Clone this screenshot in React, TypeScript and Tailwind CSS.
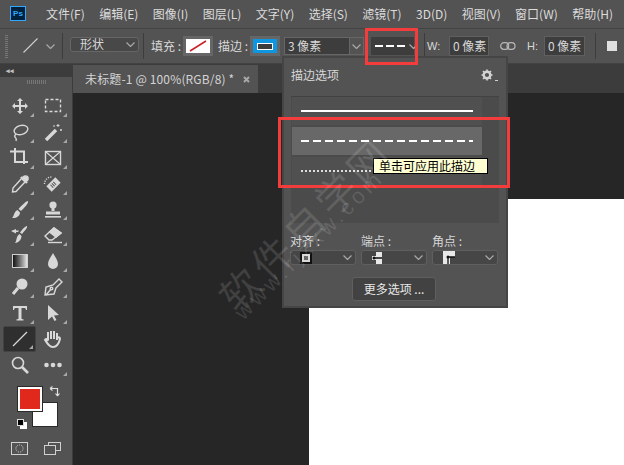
import React from "react";

const cjk = { fontFamily: '"Noto Sans CJK SC","Liberation Sans",sans-serif' };

function Chev({ className = "" }: { className?: string }) {
  return (
    <svg width="9" height="5" viewBox="0 0 9 5" className={`shrink-0 ${className}`}>
      <path d="M0.5 0.5 L4.5 4.5 L8.5 0.5" fill="none" stroke="#a8a8a8" strokeWidth="1.2" />
    </svg>
  );
}

function Corner() {
  return (
    <svg width="4" height="4" viewBox="0 0 4 4" className="absolute right-[2px] bottom-[2px]">
      <path d="M4 0 V4 H0 Z" fill="#a8a8a8" />
    </svg>
  );
}

const s = "#d8d8d8";
type Tool = { icon: React.ReactNode; corner?: boolean; active?: boolean };
const I = (c: React.ReactNode) => (
  <svg width="20" height="20" viewBox="0 0 20 20" fill="none" stroke={s} strokeWidth="1.4">
    {c}
  </svg>
);

const tools: Tool[] = [
  { corner: true, icon: I(<g fill={s} stroke="none"><path d="M10 2 l3 3 h-2 v4 h4 v-2 l3 3 -3 3 v-2 h-4 v4 h2 l-3 3 -3 -3 h2 v-4 h-4 v2 l-3 -3 3 -3 v2 h4 v-4 h-2z" /></g>) },
  { corner: true, icon: I(<rect x="2.5" y="3.5" width="15" height="12" strokeDasharray="3 2" />) },
  { corner: true, icon: I(<><ellipse cx="11" cy="8" rx="7" ry="4.5" transform="rotate(-15 11 8)" /><path d="M6 12 q-2 2 -1 3 q2 2 1 4" /></>) },
  { corner: true, icon: I(<><path d="M3 18 L13 8" strokeWidth="3.4" /><path d="M15 2v3M13.5 3.5h3M18 7v2M17 8h2M11 3v2" strokeWidth="1" /></>) },
  { corner: true, icon: I(<path d="M0 3.5 H14 V16 M5 0 V14 H18" strokeWidth="2" />) },
  { corner: true, icon: I(<><rect x="2.5" y="3.5" width="15" height="13" /><path d="M2.5 3.5 L17.5 16.5 M17.5 3.5 L2.5 16.5" strokeWidth="1.1" /></>) },
  { corner: true, icon: I(<><path d="M12 4 L3 14 L2.5 18 L6 17.5 L15 8" /><path d="M11 3 L17 9" strokeWidth="2.4" /><circle cx="15.5" cy="4.5" r="2.6" fill={s} /></>) },
  { corner: true, icon: I(<><path d="M6 15 L15 6" strokeWidth="7.5" /><path d="M8.5 12.5 L12.5 8.5" stroke="#555" strokeWidth="4" strokeDasharray="1 1" /><path d="M1.5 10 a7 7 0 0 1 7 -7" strokeDasharray="1.2 1.2" /></>) },
  { corner: true, icon: I(<g fill={s} stroke="none"><path d="M18 1 C19 3 14 8 11 11 L8.5 9 C11 6 16 1 18 1Z" /><path d="M7.5 10 L10 12.5 C10 16 6 18.5 2 18 C4.5 16 3.5 12 7.5 10Z" /></g>) },
  { corner: true, icon: I(<g fill={s} stroke="none"><circle cx="10" cy="5" r="3.6" /><rect x="8.5" y="7" width="3" height="4" /><path d="M3 11.5 H17 V14.5 H3Z" /><rect x="2" y="16" width="16" height="1.6" /></g>) },
  { corner: true, icon: I(<g fill={s} stroke="none"><path d="M17 1 C18 3 14 6 12 9 L10 7.5 C12 5 15 1 17 1Z" /><path d="M9.5 9 L11.5 11 C11.5 15 8 18 5 18 C7 15.5 6 11.5 9.5 9Z" /><path d="M1 6 L6 4 V5.5 H9 L8 7 H6 V8.5Z" /></g>) },
  { corner: true, icon: I(<><path d="M2 11 L11 3 L18 8 L9 15 H6Z" /><path d="M11 3 L18 8 L13 12 L6.5 7Z" fill={s} /><path d="M5 17.5 H19" /></>) },
  { corner: true, icon: <span className="block w-[16px] h-[14px] bg-gradient-to-r from-[#151515] to-[#e4e4e4] border border-[#cfcfcf]" /> },
  { corner: true, icon: I(<path d="M10 2 C12 6 15 9 15 13 A5 5 0 0 1 5 13 C5 9 8 6 10 2Z" fill={s} stroke="none" />) },
  { corner: true, icon: I(<><circle cx="12" cy="7" r="5.5" fill={s} stroke="none" /><path d="M8 11 L3 17" strokeWidth="3" /></>) },
  { corner: true, icon: I(<><path d="M10 8 L16 2 L19 5 L13 11 L11 17 L2 18 L3 10Z" /><path d="M3 18 L8 12" /><circle cx="8.5" cy="11.5" r="1.3" /></>) },
  { corner: true, icon: I(<g fill={s} stroke="none"><path d="M3 3 H17 V7 H16 C16 6 15.5 5 14.5 5 H11.5 V15.5 C11.5 16 12 16.2 13.5 16.2 V17.5 H6.5 V16.2 C8 16.2 8.5 16 8.5 15.5 V5 H5.5 C4.5 5 4 6 4 7 H3Z" /></g>) },
  { corner: true, icon: I(<path d="M5 2 L16 12 L11 12.5 L13.5 17 L11.5 18 L9 13.5 L5 17Z" fill={s} stroke="none" />) },
  { corner: true, active: true, icon: I(<path d="M3 17 L17 3" strokeWidth="1.2" />) },
  { corner: false, icon: I(<path d="M5 3 V11 M8 2 V10 M11 2 V10 M14 4 V11 M14 9 C16 8 17 8 17 10 C16 14 14 18 10 18 C6 18 5 15 2 11 C3 9 4 10 5 12" strokeWidth="2" />) },
  { corner: false, icon: I(<><circle cx="8" cy="8" r="5.5" strokeWidth="1.6" /><path d="M12 12 L18 18" strokeWidth="2.6" /></>) },
  { corner: true, icon: I(<g fill={s} stroke="none"><circle cx="3.5" cy="10" r="2.3" /><circle cx="10" cy="10" r="2.3" /><circle cx="16.5" cy="10" r="2.3" /></g>) },
];

function Toolbar() {
  return (
    <aside className="w-[73px] shrink-0 flex flex-col bg-[#535353] border-r border-[#3c3c3c]">
      <div className="h-[13px] bg-[#3c3c3c] flex items-center pl-[6px] text-[7px] leading-none text-[#c0c0c0] font-bold">◂◂</div>
      <div className="h-[16px] flex justify-center items-start pt-[3px]">
        <span className="w-[19px] h-[4px] bg-[repeating-linear-gradient(90deg,#777_0,#777_1px,transparent_1px,transparent_2px)]" />
      </div>
      <div className="grid grid-cols-2 px-[3px]">
        {tools.map((t, i) => (
          <div key={i} className={`relative h-[25.9px] w-[33px] flex items-center justify-center rounded-[2px] ${t.active ? "bg-[#2f2f2f] border border-[#424242]" : ""}`}>
            {t.icon}
            {t.corner && <Corner />}
          </div>
        ))}
      </div>
      <div className="relative h-[64px] shrink-0">
        <div className="absolute left-[32px] top-[24px] w-[26px] h-[25px] bg-white border border-[#2a2a2a]" />
        <div className="absolute left-[18px] top-[9px] w-[24px] h-[24px] bg-[#e0281c] border-2 border-white outline outline-1 outline-[#2a2a2a]" />
        <svg width="11" height="11" viewBox="0 0 11 11" className="absolute left-[49px] top-[8px]">
          <path d="M1 2.5 H8.5 V10 M1 2.5 l2.5 -2 M1 2.5 l2.5 2 M8.5 10 l-2 -2.5 M8.5 10 l2 -2.5" stroke="#e0e0e0" strokeWidth="1.2" fill="none" />
        </svg>
        <div className="absolute left-[20px] top-[44px] w-[7px] h-[7px] bg-white" />
        <div className="absolute left-[17px] top-[41px] w-[7px] h-[7px] bg-black border border-[#ddd]" />
      </div>
      <div className="relative flex pl-[11px] gap-[16px]">
        <svg width="17" height="13" viewBox="0 0 17 13">
          <rect x="0.5" y="0.5" width="16" height="12" fill="none" stroke="#d0d0d0" />
          <circle cx="8.5" cy="6.5" r="3.6" fill="none" stroke="#d0d0d0" strokeDasharray="1 1" />
        </svg>
        <svg width="17" height="13" viewBox="0 0 17 13" fill="none" stroke="#d0d0d0">
          <rect x="4.5" y="0.5" width="12" height="8" />
          <rect x="0.5" y="3.5" width="11" height="9" fill="#535353" />
        </svg>
      </div>
    </aside>
  );
}

const menus = ["文件(F)", "编辑(E)", "图像(I)", "图层(L)", "文字(Y)", "选择(S)", "滤镜(T)", "3D(D)", "视图(V)", "窗口(W)", "帮助(H)"];

function MenuBar() {
  return (
    <div className="h-[28px] shrink-0 flex items-center bg-[#535353] text-[#dcdcdc] text-[12px]">
      <div className="w-[16px] h-[15px] ml-[10px] mr-[20px] -mt-[1px] border border-[#31a8ff] bg-[#00213b] text-[#31a8ff] text-[8px] font-bold leading-[13px] text-center" style={{ fontFamily: '"Liberation Sans"' }}>Ps</div>
      <div className="flex gap-[14.4px]">
        {menus.map((m) => <span key={m} className="whitespace-nowrap">{m}</span>)}
      </div>
    </div>
  );
}

function Sep({ className = "" }: { className?: string }) {
  return <span className={`w-px h-[26px] bg-[#3d3d3d] shrink-0 ${className}`} />;
}

function OptionsBar() {
  return (
    <div className="relative h-[36px] shrink-0 flex items-center bg-[#535353] border-y border-[#424242] text-[#d8d8d8] text-[12px]">
      <span className="w-[3px] h-[24px] ml-[5px] shrink-0 bg-[repeating-linear-gradient(0deg,#777_0,#777_1px,transparent_1px,transparent_2px)]" />
      <svg width="15" height="15" viewBox="0 0 15 15" className="ml-[15px] shrink-0 -mt-[1px]"><path d="M0.5 14.5 L14.5 0.5" stroke="#d0d0d0" strokeWidth="1.1" /></svg>
      <Chev className="ml-[8px]" />
      <Sep className="ml-[7px]" />
      <div className="ml-[7px] w-[69px] h-[15px] shrink-0 -mt-[4px] border border-[#666] rounded-[3px] bg-[#484848] flex items-center justify-between pl-[9px] pr-[3px]">
        <span className="text-[12px] leading-none">形状</span><Chev />
      </div>
      <Sep className="ml-[4px]" />
      <span className="ml-[7px] w-[32px] shrink-0 whitespace-nowrap">填充 :</span>
      <span className="w-[30px] h-[20px] p-[3px] bg-[#666] block shrink-0">
        <svg width="24" height="14" viewBox="0 0 24 14" className="bg-white block"><path d="M4 12 L20 2" stroke="#cc2229" strokeWidth="1.6" /></svg>
      </span>
      <span className="ml-[5px] w-[32px] shrink-0 whitespace-nowrap">描边 :</span>
      <span className="w-[30px] h-[20px] p-[3px] bg-[#666] block shrink-0">
        <span className="flex w-[24px] h-[14px] bg-[#0e96e0] items-center justify-center"><span className="block w-[16px] h-[7px] bg-[#3c3c3c] border border-white" /></span>
      </span>
      <div className="ml-[4px] w-[80px] h-[18px] shrink-0 flex border border-[#666] bg-[#3d3d3d]">
        <span className="flex-1 pl-[3px] leading-[16px] text-[12px] whitespace-nowrap">3 像素</span>
        <span className="w-[14px] bg-[#535353] border-l border-[#666] flex items-center justify-center"><Chev /></span>
      </div>
      <div className="ml-[7px] w-[43px] h-[18px] shrink-0 bg-[#3d3d3d] flex items-center pl-[4px] gap-[4px]">
        <span className="flex gap-[3px] items-center">
          <span className="block w-[8px] h-[2px] bg-white" /><span className="block w-[8px] h-[2px] bg-white" /><span className="block w-[8px] h-[2px] bg-white" />
        </span>
        <Chev />
      </div>
      <Sep className="ml-[10px]" />
      <span className="ml-[2px] w-[22px] shrink-0 text-[11px]" style={{ fontFamily: '"Liberation Sans"' }}>W:</span>
      <span className="w-[40px] h-[20px] shrink-0 bg-[#3d3d3d] border border-[#5f5f5f] pl-[3px] leading-[18px] whitespace-nowrap">0 像素</span>
      <svg width="16" height="8" viewBox="0 0 16 8" className="ml-[11px] shrink-0" fill="none" stroke="#b8b8b8" strokeWidth="1.2"><rect x="0.7" y="0.7" width="8" height="6.6" rx="3.3" /><rect x="7" y="0.7" width="8" height="6.6" rx="3.3" /></svg>
      <span className="ml-[11px] w-[17px] shrink-0 text-[11px]" style={{ fontFamily: '"Liberation Sans"' }}>H:</span>
      <span className="w-[41px] h-[20px] shrink-0 bg-[#3d3d3d] border border-[#5f5f5f] pl-[3px] leading-[18px] whitespace-nowrap">0 像素</span>
      <Sep className="ml-[10px]" />
      <span className="ml-[11px] w-[10px] h-[10px] bg-[#e0e0e0] shrink-0" />
    </div>
  );
}

function Select({ label, icon }: { label: string; icon: React.ReactNode }) {
  return (
    <div className="w-[66px]">
      <div className="text-[12px] leading-[14px] text-[#d8d8d8] whitespace-nowrap">{label}</div>
      <div className="mt-[2px] h-[15px] rounded-[3px] bg-[#464646] border border-[#5f5f5f] flex items-center justify-between pr-[3px] pl-[9px]">
        {icon}<Chev />
      </div>
    </div>
  );
}

function Popover() {
  return (
    <div className="absolute left-[282px] top-[56px] w-[226px] h-[252px] bg-[#535353] border-2 border-[#454545] px-[6px]">
      <div className="flex justify-between items-center h-[33px] text-[12px] text-[#d8d8d8]">
        <span className="pl-[1px]">描边选项</span>
        <span className="flex items-end gap-[2px] pr-[2px]">
          <svg width="12" height="12" viewBox="0 0 12 12"><circle cx="6" cy="6" r="3.3" fill="none" stroke="#d4d4d4" strokeWidth="2.4" /><path d="M6 0.5V2.5M6 9.5V11.5M0.5 6H2.5M9.5 6H11.5M2 2L3.5 3.5M8.5 8.5L10 10M10 2L8.5 3.5M3.5 8.5L2 10" stroke="#d4d4d4" strokeWidth="1.6" /></svg>
          <span className="block w-[3px] h-[1px] bg-[#d0d0d0]" />
        </span>
      </div>
      <div className="mt-[5px] ml-[1px] h-[127px] w-[208px] bg-[#4b4b4b] border-t border-[#424242]">
        <div className="w-[190px] ml-[1px] flex flex-col gap-[2px]">
          <div className="h-[28px] bg-[#505050] flex items-center px-[9px]"><span className="block w-full h-[2px] bg-white" /></div>
          <div className="h-[28px] bg-[#686868] flex items-center px-[9px]"><span className="block w-full h-[2px] bg-[repeating-linear-gradient(90deg,#fff_0,#fff_8px,transparent_8px,transparent_12px)]" /></div>
          <div className="h-[28px] bg-[#505050] flex items-center px-[9px]"><span className="block w-full h-[2px] bg-[repeating-linear-gradient(90deg,#ddd_0,#ddd_2px,transparent_2px,transparent_4px)]" /></div>
        </div>
      </div>
      <div className="mt-[11px] flex gap-[5px]">
        <Select
          label="对齐 :"
          icon={
            <svg width="12" height="12" viewBox="0 0 12 12" className="shrink-0">
              <rect x="1" y="1" width="10" height="10" fill="#d8d8d8" stroke="#111" strokeWidth="2" />
              <rect x="4" y="4" width="4" height="4" fill="#666" />
            </svg>
          }
        />
        <Select
          label="端点 :"
          icon={
            <svg width="10" height="12" viewBox="0 0 10 12" className="shrink-0 ml-[1px]">
              <path d="M4 0 H10 V12 H4 V8 H0 V4 H4Z" fill="#e8e8e8" />
              <path d="M1 6 H10" stroke="#111" strokeWidth="1.5" />
              <circle cx="2" cy="6" r="1.5" fill="#111" />
            </svg>
          }
        />
        <Select
          label="角点 :"
          icon={
            <svg width="12" height="13" viewBox="0 0 12 13" className="shrink-0 ml-[1px]">
              <path d="M0 0 H12 V6 H7 V13 H0Z" fill="#e8e8e8" />
              <path d="M5 13 V6 H12" stroke="#111" strokeWidth="1.3" fill="none" />
              <circle cx="5" cy="6" r="1.5" fill="#111" />
            </svg>
          }
        />
      </div>
      <div className="mt-[12px] ml-[62px] w-[84px] h-[24px] rounded-[3px] bg-[#424242] border border-[#5f5f5f] text-[12px] leading-[22px] text-center text-[#e8e8e8]">更多选项 ...</div>
    </div>
  );
}

export default function App() {
  return (
    <div className="relative w-[624px] h-[465px] overflow-hidden bg-[#535353] flex flex-col" style={cjk}>
      <MenuBar />
      <OptionsBar />
      <div className="flex-1 min-h-0 flex">
        <Toolbar />
        <div className="flex-1 min-w-0 flex flex-col bg-[#3c3c3c]">
          <div className="h-[29px] shrink-0 flex items-end">
            <div className="w-[185px] h-[28px] bg-[#535353] flex items-center pl-[12px] text-[12px] tracking-[0.15px] text-[#d4d4d4] whitespace-nowrap">
              未标题-1 @ 100%(RGB/8) *
              <svg width="7" height="7" viewBox="0 0 7 7" className="ml-[9px] shrink-0"><path d="M1 1 L6 6 M6 1 L1 6" stroke="#a8a8a8" strokeWidth="2" /></svg>
            </div>
          </div>
          <div className="flex-1 bg-[#262626] relative">
            <div className="absolute left-[236px] top-[106px] right-0 bottom-0 bg-white" />
          </div>
        </div>
      </div>
      <Popover />
      <div className="absolute left-[373px] top-[158px] w-[115px] h-[16px] bg-[#ffffd2] border border-black text-[12px] leading-[14px] text-black pl-[5px] whitespace-nowrap">单击可应用此描边</div>
      <div className="absolute left-[365px] top-[28px] w-[53px] h-[37px] border-[3px] border-[#f33c3c]" />
      <div className="absolute left-[278px] top-[117px] w-[232px] h-[71px] border-[3px] border-[#f33c3c]" />
      <div className="absolute left-[192px] top-[203px] text-[40px] tracking-[5px] leading-none text-white/[0.12] -rotate-45 whitespace-nowrap pointer-events-none">软件自学网</div>
      <div className="absolute left-[209px] top-[234px] text-[22px] tracking-[4px] leading-none text-white/[0.12] -rotate-45 whitespace-nowrap pointer-events-none" style={{ fontFamily: '"Liberation Sans"' }}>www.rjzxw.com</div>
    </div>
  );
}
